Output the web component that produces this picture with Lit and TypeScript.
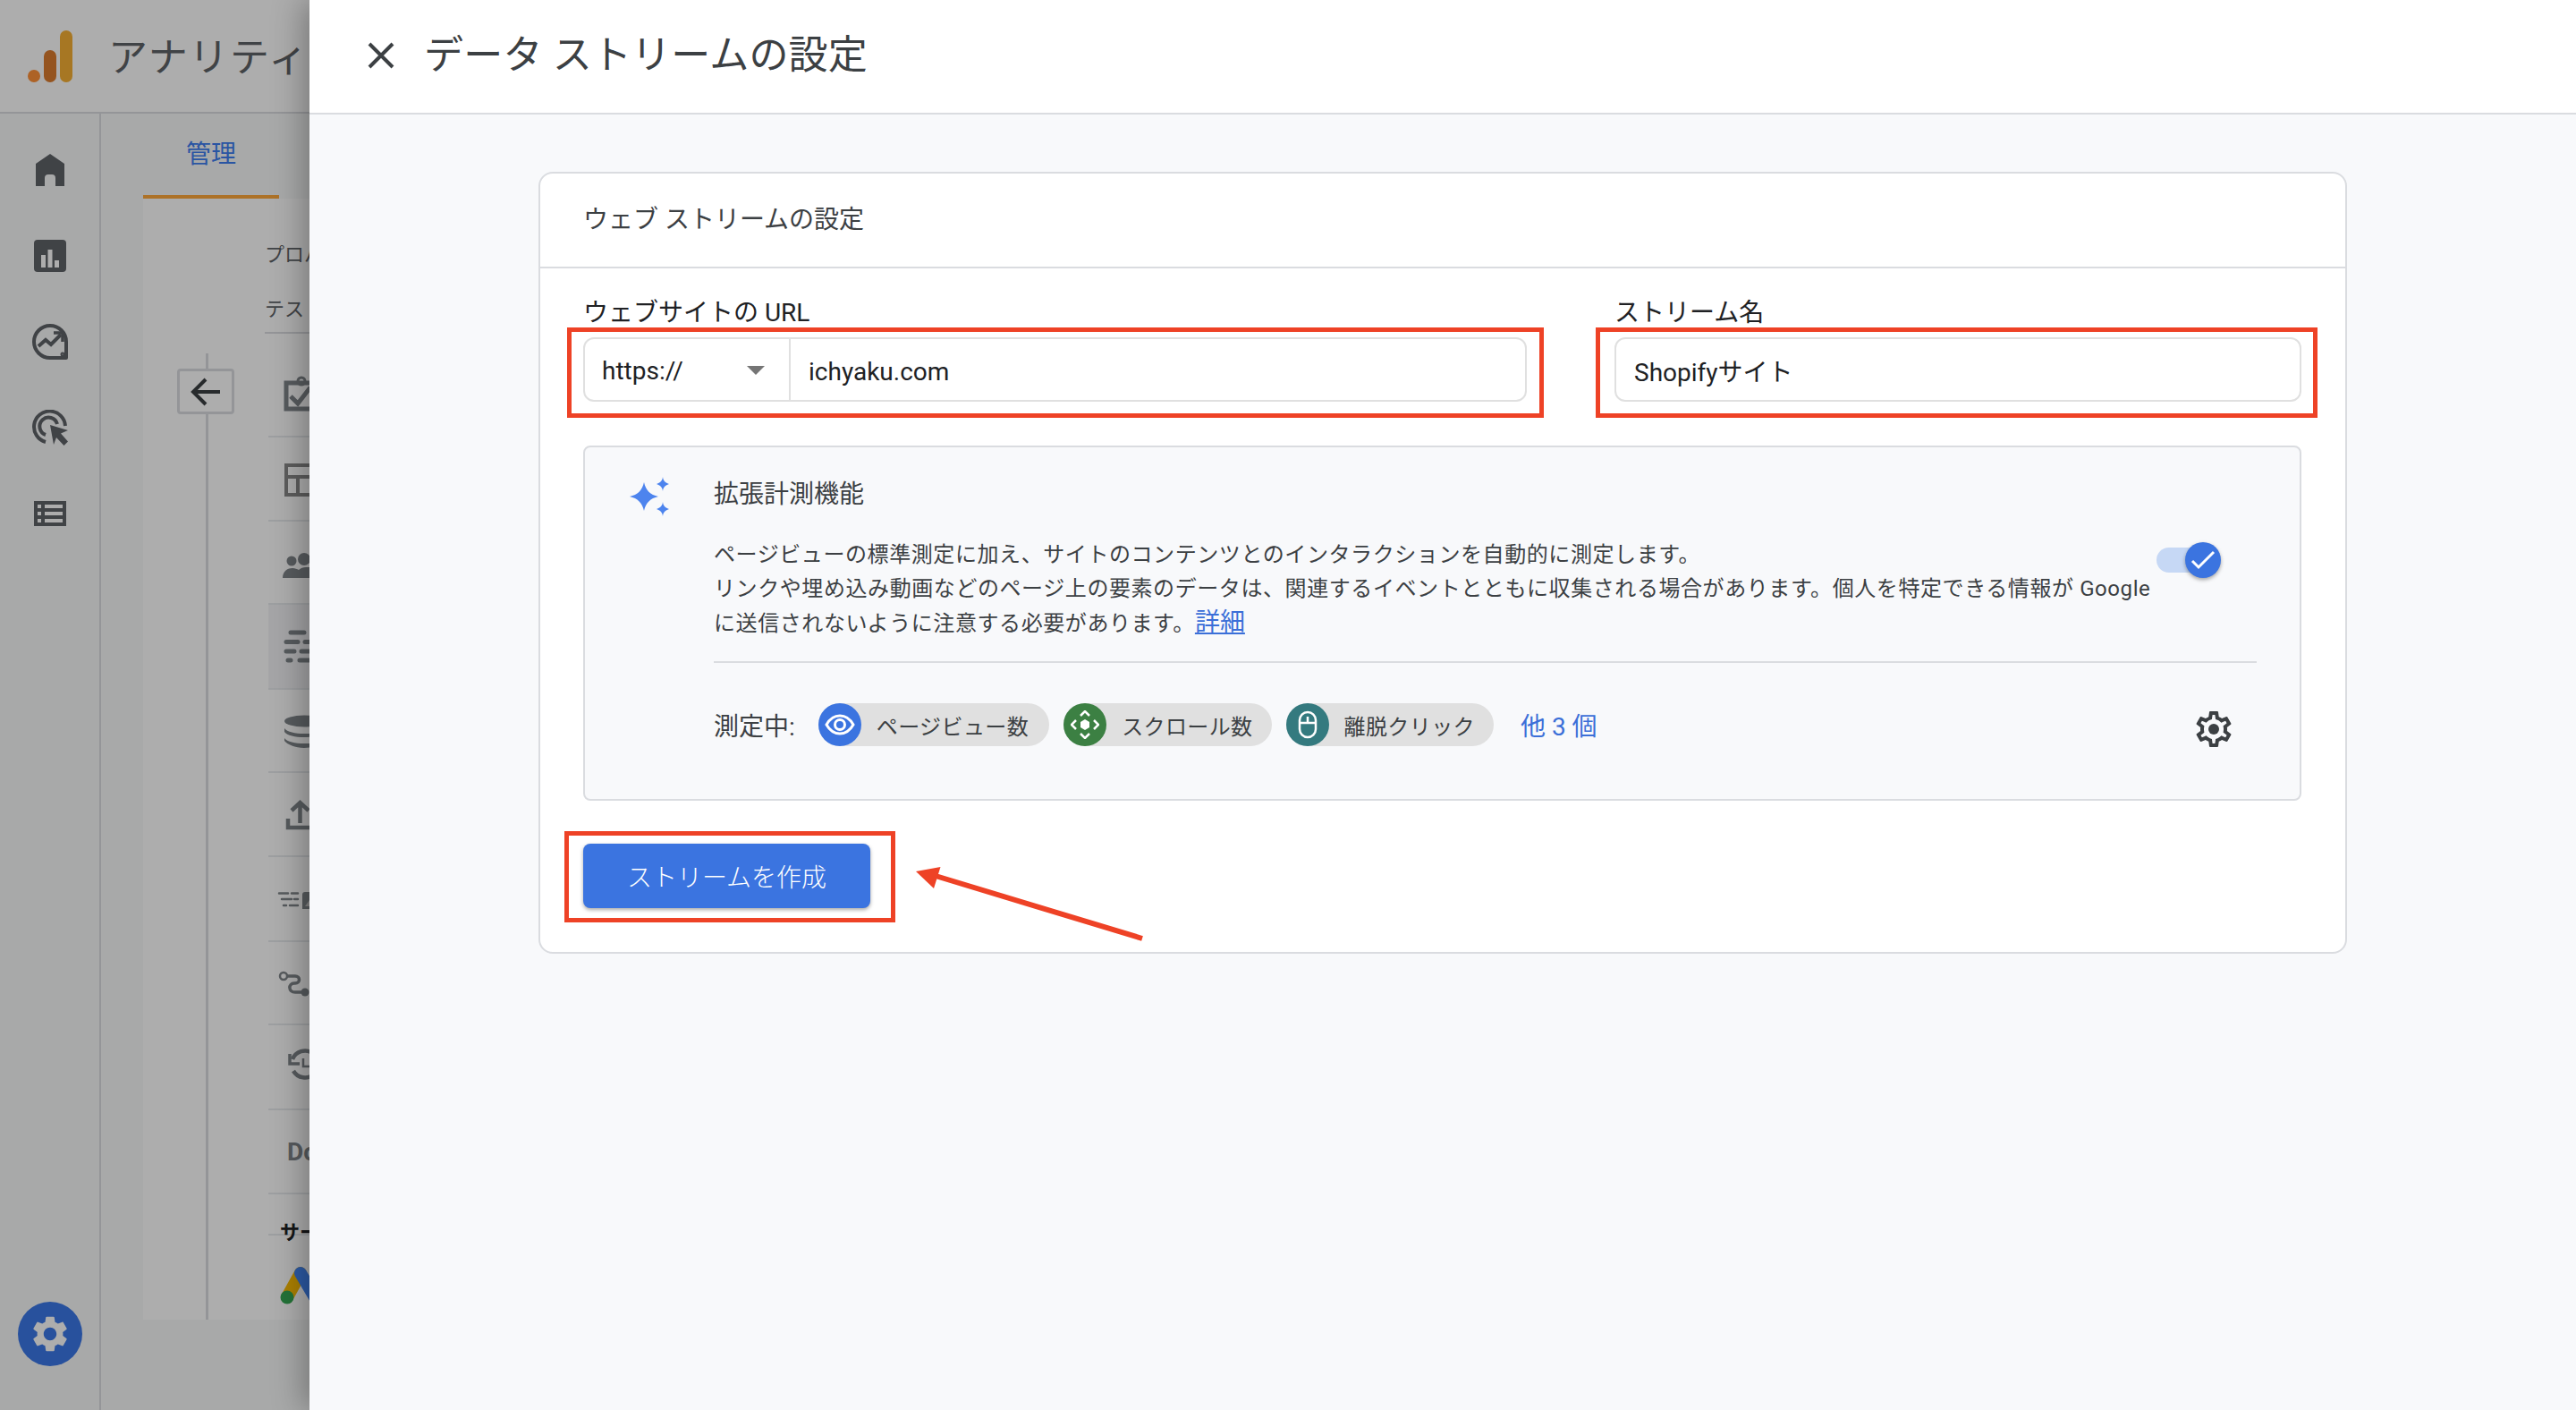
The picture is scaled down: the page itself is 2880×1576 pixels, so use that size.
import { LitElement, html, css, svg } from "lit";
import { customElement } from "lit/decorators.js";

const GEAR_FILLED =
  "M19.14 12.94c.04-.3.06-.61.06-.94 0-.32-.02-.64-.07-.94l2.03-1.58c.18-.14.23-.41.12-.61l-1.92-3.32c-.12-.22-.37-.29-.59-.22l-2.39.96c-.5-.38-1.03-.7-1.62-.94l-.36-2.54c-.04-.24-.24-.41-.48-.41h-3.84c-.24 0-.43.17-.47.41l-.36 2.54c-.59.24-1.13.57-1.62.94l-2.39-.96c-.22-.08-.47 0-.59.22L2.74 8.87c-.12.21-.08.47.12.61l2.03 1.58c-.05.3-.09.63-.09.94s.02.64.07.94l-2.03 1.58c-.18.14-.23.41-.12.61l1.92 3.32c.12.22.37.29.59.22l2.39-.96c.5.38 1.03.7 1.62.94l.36 2.54c.05.24.24.41.48.41h3.84c.24 0 .44-.17.47-.41l.36-2.54c.59-.24 1.13-.56 1.62-.94l2.39.96c.22.08.47 0 .59-.22l1.92-3.32c.12-.22.07-.47-.12-.61l-2.01-1.58zM12 15.6c-1.98 0-3.6-1.62-3.6-3.6s1.62-3.6 3.6-3.6 3.6 1.62 3.6 3.6-1.62 3.6-3.6 3.6z";

const GEAR_OUTLINE =
  "M19.43 12.98c.04-.32.07-.64.07-.98 0-.34-.03-.66-.07-.98l2.11-1.65c.19-.15.24-.42.12-.64l-2-3.46c-.09-.16-.26-.25-.44-.25-.06 0-.12.01-.17.03l-2.49 1c-.52-.4-1.08-.73-1.69-.98l-.38-2.65C14.46 2.18 14.25 2 14 2h-4c-.25 0-.46.18-.49.42l-.38 2.65c-.61.25-1.17.59-1.69.98l-2.49-1c-.06-.02-.12-.03-.18-.03-.17 0-.34.09-.43.25l-2 3.46c-.13.22-.07.49.12.64l2.11 1.65c-.04.32-.07.65-.07.98 0 .33.03.66.07.98l-2.11 1.65c-.19.15-.24.42-.12.64l2 3.46c.09.16.26.25.44.25.06 0 .12-.01.17-.03l2.49-1c.52.4 1.08.73 1.69.98l.38 2.65c.03.24.24.42.49.42h4c.25 0 .46-.18.49-.42l.38-2.65c.61-.25 1.17-.59 1.69-.98l2.49 1c.06.02.12.03.18.03.17 0 .34-.09.43-.25l2-3.46c.12-.22.07-.49-.12-.64l-2.11-1.65zm-1.98-1.71c.04.31.05.52.05.73 0 .21-.02.43-.05.73l-.14 1.13.89.7 1.08.84-.7 1.21-1.27-.51-1.04-.42-.9.68c-.43.32-.84.56-1.25.73l-1.06.43-.16 1.13-.2 1.35h-1.4l-.19-1.35-.16-1.13-1.06-.43c-.43-.18-.83-.41-1.23-.71l-.91-.7-1.06.43-1.27.51-.7-1.21 1.08-.84.89-.7-.14-1.13c-.03-.31-.05-.54-.05-.74s.02-.43.05-.73l.14-1.13-.89-.7-1.08-.84.7-1.21 1.27.51 1.04.42.9-.68c.43-.32.84-.56 1.25-.73l1.06-.43.16-1.13.2-1.35h1.39l.19 1.35.16 1.13 1.06.43c.43.18.83.41 1.23.71l.91.7 1.06-.43 1.27-.51.7 1.21-1.07.85-.89.7.14 1.13z";

// icons of the admin list, in page coordinates (the panel covers them from x=346)
const ROWS = [
  {
    top: 373,
    bottom: 489,
    icon: svg`<path d="M320 428h40v29h-40z" fill="none" stroke="#80868b" stroke-width="5"/><circle cx="337" cy="426" r="4" fill="none" stroke="#80868b" stroke-width="3"/><path d="M325 443l8 8 14-18" fill="none" stroke="#80868b" stroke-width="5"/>`,
  },
  {
    top: 489,
    bottom: 583,
    icon: svg`<path d="M320 520h40v33h-40zM320 533h40M333 533v20" fill="none" stroke="#8a8a8a" stroke-width="4"/>`,
  },
  {
    top: 583,
    bottom: 676,
    icon: svg`<circle cx="326" cy="627" r="5.5" fill="#80868b"/><circle cx="340" cy="625" r="7" fill="#80868b"/><path d="M316 646c0-8 6-11 11-11 3 0 5 1 7 2 2-2 5-3 8-3h6v12z" fill="#80868b"/>`,
  },
  {
    top: 676,
    bottom: 771,
    active: true,
    icon: svg`<path d="M325 707h15M320 717.500h13M341 717.500h8M320 728h9M337 728h12M322 738h3M335 738h14" fill="none" stroke="#80868b" stroke-width="5" stroke-linecap="round"/>`,
  },
  {
    top: 771,
    bottom: 864,
    icon: svg`<ellipse cx="340" cy="806" rx="22" ry="6.500" fill="#80868b"/><path d="M318 814c3 4 12 6 22 6s19-2 22-6v4c-3 4-12 6-22 6s-19-2-22-6zM318 825c3 4 12 6 22 6s19-2 22-6v3c-3 4-12 8-22 8s-19-4-22-8z" fill="#80868b"/>`,
  },
  {
    top: 864,
    bottom: 958,
    icon: svg`<path d="M322 915v10h30M335.500 920v-22M326 906l9.500-9 9.500 9" fill="none" stroke="#80868b" stroke-width="4.500"/>`,
  },
  {
    top: 958,
    bottom: 1053,
    icon: svg`<path d="M312 998.500h10M326 998.500h7M315 1005h11M329 1005h4M317 1012h3M324 1012h9" fill="none" stroke="#80868b" stroke-width="2.500" stroke-linecap="round"/><path d="M338 1000a3 3 0 0 1 3-3h9v19h-12z" fill="#80868b"/><path d="M341 1013l5-7 4 4v3z" fill="#c4c4c4"/>`,
  },
  {
    top: 1053,
    bottom: 1146,
    icon: svg`<circle cx="317" cy="1091" r="4" fill="none" stroke="#80868b" stroke-width="2.500"/><path d="M321 1091h9c6 0 6 8 0 8h-1c-7 0-7 10 1 10h11" fill="none" stroke="#80868b" stroke-width="3.500"/><circle cx="341" cy="1109" r="4.500" fill="#80868b"/>`,
  },
  {
    top: 1146,
    bottom: 1241,
    icon: svg`<path d="M328 1197a15 15 0 1 0-1-13" fill="none" stroke="#80868b" stroke-width="4.500"/><path d="M324 1178v11h11" fill="none" stroke="#80868b" stroke-width="3.500"/><path d="M339 1183v9h7" fill="none" stroke="#80868b" stroke-width="2.500"/>`,
  },
];

@customElement("app-root")
export class AppRoot extends LitElement {
  static styles = css`
    :host {
      display: block;
      position: relative;
      height: 1576px;
      overflow: hidden;
      font-family: Roboto, "Noto Sans CJK JP", sans-serif;
      color: #3c4043;
      background: #f8f9fa;
    }
    svg {
      display: block;
      flex: none;
    }

    /* page behind the drawer */
    .page {
      display: flex;
      flex-direction: column;
      height: 100%;
    }
    .topbar {
      display: flex;
      align-items: center;
      flex: none;
      box-sizing: border-box;
      height: 127px;
      padding-left: 31px;
      gap: 40px;
      border-bottom: 2px solid #dadce0;
      background: #fff;
    }
    .product {
      margin-top: 4px;
      font-size: 44px;
      line-height: 60px;
      letter-spacing: 1.6px;
      color: #5f6368;
      white-space: nowrap;
    }
    .page-body {
      display: flex;
      flex: 1;
      min-height: 0;
    }
    .rail {
      display: flex;
      flex-direction: column;
      align-items: center;
      flex: none;
      box-sizing: content-box;
      width: 111px;
      border-right: 2px solid #dadce0;
    }
    .rail-item {
      display: flex;
      align-items: center;
      justify-content: center;
      flex: none;
      width: 100%;
      height: 96px;
    }
    .rail-first {
      margin-top: 15px;
    }
    .admin-gear {
      display: flex;
      align-items: center;
      justify-content: center;
      width: 72px;
      height: 72px;
      margin-top: auto;
      margin-bottom: 49px;
      border-radius: 50%;
      background: #3b78e7;
    }
    .admin {
      flex: 1;
      padding-left: 47px;
      background: #f8f9fa;
      min-width: 0;
    }
    .tab {
      display: flex;
      align-items: center;
      justify-content: center;
      box-sizing: border-box;
      width: 152px;
      height: 95px;
      padding-bottom: 5px;
      border-bottom: 4px solid #ffa83c;
      font-size: 28px;
      color: #3f7ef0;
    }
    .admin-sheet {
      display: flex;
      height: 1253px;
      background: #fff;
      overflow: hidden;
    }
    .steps {
      display: flex;
      flex-direction: column;
      flex: none;
      width: 136px;
      padding-top: 173px;
      box-sizing: border-box;
    }
    .step-line {
      width: 3px;
      margin-left: 70px;
      background: #dadce0;
    }
    .step-line.short {
      height: 17px;
    }
    .step-line.long {
      flex: 1;
    }
    .back {
      display: flex;
      align-items: center;
      justify-content: center;
      box-sizing: border-box;
      width: 64px;
      height: 51px;
      margin-left: 38px;
      border: 3px solid #dadce0;
      border-radius: 4px;
    }
    .column {
      flex: 1;
      min-width: 0;
      white-space: nowrap;
      overflow: hidden;
    }
    .crumb {
      font-size: 22px;
      line-height: 30px;
      color: #5f6368;
    }
    .crumb.first {
      margin-top: 48px;
    }
    .crumb.second {
      margin-top: 31px;
      padding-bottom: 10px;
      border-bottom: 2px solid #dadce0;
    }
    .rows {
      margin-left: 4px;
    }
    .row {
      box-sizing: border-box;
      border-bottom: 2px solid #e8eaed;
    }
    .row.active {
      background: #f3f4f6;
    }
    .row.doc {
      display: flex;
      align-items: center;
      box-sizing: border-box;
      height: 94px;
      padding-left: 21px;
      font-size: 28px;
      font-weight: 700;
      color: #80868b;
    }
    .service {
      margin-top: 28px;
      padding-left: 13px;
      font-size: 22px;
      line-height: 30px;
      font-weight: 700;
      color: #202124;
      background: linear-gradient(#e8eaed, #e8eaed) no-repeat 0 16px / 100% 2px;
    }
    .ads {
      margin-top: 5px;
    }

    /* dim layer and drawer */
    .scrim {
      position: absolute;
      inset: 0;
      background: rgba(0, 0, 0, 0.32);
    }
    .drawer {
      position: absolute;
      top: 0;
      right: 0;
      bottom: 0;
      left: 346px;
      display: flex;
      flex-direction: column;
      background: #f8f9fb;
      box-shadow: -6px 0 34px rgba(0, 0, 0, 0.32);
    }
    .drawer-head {
      display: flex;
      align-items: center;
      flex: none;
      box-sizing: border-box;
      height: 128px;
      padding: 0 0 2px 56px;
      gap: 24px;
      background: #fff;
      border-bottom: 2px solid #dadce0;
    }
    .drawer-title {
      font-size: 44px;
      line-height: 60px;
      letter-spacing: 0.2px;
      color: #3c4043;
    }
    .drawer-main {
      padding: 64px 256px 0;
    }
    .card {
      border: 2px solid #dadce0;
      border-radius: 16px;
      background: #fff;
    }
    .card-head {
      box-sizing: border-box;
      height: 106px;
      padding: 34px 48px 0;
      font-size: 28px;
      line-height: 36px;
      color: #3c4043;
      border-bottom: 2px solid #dadce0;
    }
    .card-body {
      padding: 32px 49px 49px 48px;
    }
    .fields {
      display: grid;
      grid-template-columns: 1055px 1fr;
      column-gap: 98px;
    }
    .label {
      margin-bottom: 9px;
      font-size: 28px;
      line-height: 36px;
      color: #202124;
    }
    .mark-wrap {
      position: relative;
    }
    .mark {
      position: absolute;
      border: 5px solid #ee4226;
      pointer-events: none;
    }
    .mark.url {
      inset: -11px -19px -18px -18px;
    }
    .mark.name {
      inset: -11px -18px -18px -21px;
    }
    .mark.submit {
      inset: -14px -28px -16px -21px;
    }
    .input {
      display: flex;
      align-items: center;
      box-sizing: border-box;
      height: 72px;
      border: 2px solid #e0e0e0;
      border-radius: 12px;
      background: #fff;
      font-size: 28px;
      color: #202124;
    }
    .proto {
      display: flex;
      align-items: center;
      justify-content: space-between;
      flex: none;
      box-sizing: border-box;
      width: 230px;
      height: 100%;
      padding: 2px 27px 0 19px;
      border-right: 2px solid #e0e0e0;
    }
    .caret {
      width: 0;
      height: 0;
      border-left: 10px solid transparent;
      border-right: 10px solid transparent;
      border-top: 10px solid #757575;
    }
    .value {
      padding: 4px 0 0 20px;
    }
    .value.name {
      padding-top: 2px;
    }
    .enhanced {
      display: grid;
      grid-template-columns: 144px 1fr;
      margin-top: 49px;
      padding: 35px 48px 59px 0;
      border: 2px solid #dadce0;
      border-radius: 8px;
      background: #f8f9fb;
    }
    .spark {
      margin: -2px 0 0 50px;
    }
    .enhanced-title {
      font-size: 28px;
      line-height: 36px;
      color: #3c4043;
    }
    .desc-row {
      display: flex;
      margin-top: 30px;
    }
    .desc {
      flex: 1;
      font-size: 24px;
      line-height: 38px;
      letter-spacing: 0.58px;
      white-space: nowrap;
      color: #3c4043;
    }
    .desc a {
      font-size: 28px;
      letter-spacing: 0;
      color: #3b6fd8;
      text-decoration: underline;
    }
    .toggle {
      position: relative;
      flex: none;
      width: 72px;
      height: 40px;
      margin: 5px 40px 0 0;
    }
    .toggle-track {
      position: absolute;
      top: 6px;
      left: 0;
      width: 60px;
      height: 28px;
      border-radius: 14px;
      background: #c6d8f5;
    }
    .toggle-thumb {
      position: absolute;
      top: 0;
      right: 0;
      display: flex;
      align-items: center;
      justify-content: center;
      width: 40px;
      height: 40px;
      border-radius: 50%;
      background: #3b74e0;
      box-shadow: 0 2px 4px rgba(0, 0, 0, 0.35);
    }
    .rule {
      height: 2px;
      margin-top: 23px;
      background: #dadce0;
    }
    .measuring {
      display: flex;
      align-items: center;
      margin-top: 45px;
      height: 48px;
    }
    .measuring-label {
      margin-right: 26px;
      font-size: 28px;
      color: #3c4043;
    }
    .chips {
      display: flex;
      gap: 16px;
    }
    .chip {
      display: flex;
      align-items: center;
      height: 48px;
      padding-right: 21px;
      gap: 17px;
      border-radius: 24px;
      background: #e0e0e0;
      font-size: 24px;
      letter-spacing: 0.4px;
      color: #3c4043;
      white-space: nowrap;
    }
    .chip:first-child {
      padding-right: 23px;
    }
    .chip-icon {
      display: flex;
      align-items: center;
      justify-content: center;
      width: 48px;
      height: 48px;
      border-radius: 50%;
    }
    .chip-icon.blue {
      background: #3b74e0;
    }
    .chip-icon.green {
      background: #3c8043;
    }
    .chip-icon.teal {
      background: #347a7f;
    }
    .more {
      margin-left: 30px;
      font-size: 28px;
      color: #3b6fd8;
    }
    .gear {
      margin: 10px 24px 0 auto;
    }
    .actions {
      margin-top: 48px;
    }
    .button-wrap {
      position: relative;
      width: 321px;
      height: 72px;
    }
    .primary {
      display: flex;
      align-items: center;
      justify-content: center;
      height: 100%;
      border-radius: 8px;
      background: #3b74e0;
      color: #fff;
      font-size: 28px;
      font-weight: 300;
      box-shadow: 0 2px 4px rgba(0, 0, 0, 0.35);
    }
    .arrow {
      position: absolute;
      left: 368px;
      top: 18px;
    }
  `;

  private renderRail() {
    return html`
      <div class="rail">
        <div class="rail-item rail-first">
          <svg width="32" height="36" viewBox="0 0 32 36">
            <path d="M16 0l16 11v25H22V27a4 4 0 0 0-4-4h-4a4 4 0 0 0-4 4v9H0V11z" fill="#5f6368" />
          </svg>
        </div>
        <div class="rail-item">
          <svg width="36" height="36" viewBox="0 0 36 36">
            <rect width="36" height="36" rx="4" fill="#5f6368" />
            <path d="M8 17h5v14H8zM15.500 11h5v20h-5zM23 23h5v8h-5z" fill="#fff" />
          </svg>
        </div>
        <div class="rail-item">
          <svg width="40" height="40" viewBox="0 0 40 40" fill="none" stroke="#5f6368">
            <path d="M38 38H20A18 18 0 1 1 38 20z" stroke-width="4" stroke-linejoin="round" />
            <path d="M7 25l8-7 6 5 11-11" stroke-width="4" />
            <path d="M24 10h10v10" stroke-width="3.500" />
            <circle cx="34" cy="34" r="1.500" stroke-width="2" />
          </svg>
        </div>
        <div class="rail-item">
          <svg width="40" height="40" viewBox="0 0 40 40" fill="none" stroke="#5f6368">
            <path d="M15 36A17.500 17.500 0 1 1 37 18" stroke-width="4" />
            <path d="M15 28A10 10 0 1 1 28 16" stroke-width="4" />
            <path d="M20 17l20 6-8 3.500 8 9-4.500 4.500-8.500-9-3 8z" fill="#5f6368" stroke="none" />
          </svg>
        </div>
        <div class="rail-item">
          <svg width="36" height="28" viewBox="0 0 36 28">
            <rect width="36" height="28" fill="#5f6368" />
            <path d="M4 4h4v4H4zM12 4h20v4H12zM4 12h4v4H4zM12 12h20v4H12zM4 20h4v4H4zM12 20h20v4H12z" fill="#fff" />
          </svg>
        </div>
        <div class="admin-gear">
          <svg width="48" height="48" viewBox="0 0 24 24"><path d=${GEAR_FILLED} fill="#fff" /></svg>
        </div>
      </div>
    `;
  }

  private renderAdmin() {
    return html`
      <div class="admin">
        <div class="tab">管理</div>
        <div class="admin-sheet">
          <div class="steps">
            <div class="step-line short"></div>
            <div class="back">
              <svg width="34" height="32" viewBox="0 0 34 32" fill="none" stroke="#3c4043" stroke-width="4">
                <path d="M33 16H3M17 2L3 16l14 14" />
              </svg>
            </div>
            <div class="step-line long"></div>
          </div>
          <div class="column">
            <div class="crumb first">プロパティ</div>
            <div class="crumb second">テスト</div>
            <div class="rows">
              ${ROWS.map(
                (r) => html`
                  <div class="row ${r.active ? "active" : ""}">
                    <svg width="46" height=${r.bottom - r.top - 2} viewBox="300 ${r.top} 46 ${r.bottom - r.top - 2}">
                      ${r.icon}
                    </svg>
                  </div>
                `
              )}
              <div class="row doc">Do</div>
              <div class="service">サービス間のリンク設定</div>
              <svg class="ads" width="46" height="70" viewBox="300 1400 46 70">
                <path d="M321 1452l15-27" stroke="#fbbc04" stroke-width="14" stroke-linecap="round" />
                <path d="M336 1425l20 34" stroke="#4285f4" stroke-width="14" stroke-linecap="round" />
                <ellipse cx="321" cy="1452" rx="7.500" ry="7.500" fill="#34a853" />
              </svg>
            </div>
          </div>
        </div>
      </div>
    `;
  }

  private renderEnhanced() {
    return html`
      <div class="enhanced">
        <svg class="spark" width="46" height="46" viewBox="0 0 46 46" fill="#4d84ee">
          <path d="M16 6C18 15 23 20 32 22 23 24 18 29 16 38 14 29 9 24 0 22 9 20 14 15 16 6z" />
          <path d="M37 0C37.500 4 39 6 44 8 39 10 37.500 12 37 16 36.500 12 35 10 30 8 35 6 36.500 4 37 0z" />
          <path d="M37 28C37.500 32 39 34 44 36 39 38 37.500 40 37 44 36.500 40 35 38 30 36 35 34 36.500 32 37 28z" />
        </svg>
        <div>
          <div class="enhanced-title">拡張計測機能</div>
          <div class="desc-row">
            <div class="desc">
              ページビューの標準測定に加え、サイトのコンテンツとのインタラクションを自動的に測定します。<br />
              リンクや埋め込み動画などのページ上の要素のデータは、関連するイベントとともに収集される場合があります。個人を特定できる情報が Google<br />
              に送信されないように注意する必要があります。<a>詳細</a>
            </div>
            <div class="toggle">
              <div class="toggle-track"></div>
              <div class="toggle-thumb">
                <svg width="28" height="22" viewBox="0 0 28 22" fill="none" stroke="#fff" stroke-width="3">
                  <path d="M2 12l7 7L26 2" />
                </svg>
              </div>
            </div>
          </div>
          <div class="rule"></div>
          <div class="measuring">
            <span class="measuring-label">測定中:</span>
            <div class="chips">
              <div class="chip">
                <span class="chip-icon blue">
                  <svg width="34" height="24" viewBox="0 0 34 24" fill="none" stroke="#fff" stroke-width="3">
                    <path d="M2 12C6 5 11 2 17 2s11 3 15 10c-4 7-9 10-15 10S6 19 2 12z" />
                    <circle cx="17" cy="12" r="5.500" />
                  </svg>
                </span>
                ページビュー数
              </div>
              <div class="chip">
                <span class="chip-icon green">
                  <svg width="32" height="32" viewBox="0 0 32 32" fill="none" stroke="#fff" stroke-width="2.500">
                    <path d="M11 6l5-5 5 5M11 26l5 5 5-5M6 11l-5 5 5 5M26 11l5 5-5 5" />
                    <path d="M16 10l5 3v6l-5 3-5-3v-6z" fill="#fff" stroke="none" />
                  </svg>
                </span>
                スクロール数
              </div>
              <div class="chip">
                <span class="chip-icon teal">
                  <svg width="22" height="32" viewBox="0 0 22 32" fill="none" stroke="#fff" stroke-width="2.500">
                    <rect x="2" y="2" width="18" height="28" rx="9" />
                    <path d="M2 14h18M11 7v7" />
                  </svg>
                </span>
                離脱クリック
              </div>
            </div>
            <span class="more">他 3 個</span>
            <svg class="gear" width="48" height="48" viewBox="0 0 24 24" fill="#3c4043">
              <path d=${GEAR_OUTLINE} />
              <circle cx="12" cy="12" r="3" />
            </svg>
          </div>
        </div>
      </div>
    `;
  }

  render() {
    return html`
      <div class="page">
        <div class="topbar">
          <svg width="50" height="58" viewBox="0 0 50 58">
            <circle cx="7" cy="51" r="7" fill="#ff9139" />
            <rect x="18" y="22" width="14" height="36" rx="7" fill="#dc7c2e" />
            <rect x="36" y="0" width="14" height="58" rx="7" fill="#f7b034" />
          </svg>
          <span class="product">アナリティクス</span>
        </div>
        <div class="page-body">${this.renderRail()} ${this.renderAdmin()}</div>
      </div>
      <div class="scrim"></div>
      <div class="drawer">
        <div class="drawer-head">
          <svg width="48" height="48" viewBox="0 0 48 48" fill="none" stroke="#3c4043" stroke-width="4">
            <path d="M11 11l26 26M37 11L11 37" />
          </svg>
          <span class="drawer-title">データ ストリームの設定</span>
        </div>
        <div class="drawer-main">
          <div class="card">
            <div class="card-head">ウェブ ストリームの設定</div>
            <div class="card-body">
              <div class="fields">
                <div>
                  <div class="label">ウェブサイトの URL</div>
                  <div class="mark-wrap">
                    <div class="input">
                      <div class="proto"><span>https://</span><span class="caret"></span></div>
                      <span class="value">ichyaku.com</span>
                    </div>
                    <div class="mark url"></div>
                  </div>
                </div>
                <div>
                  <div class="label">ストリーム名</div>
                  <div class="mark-wrap">
                    <div class="input"><span class="value name">Shopifyサイト</span></div>
                    <div class="mark name"></div>
                  </div>
                </div>
              </div>
              ${this.renderEnhanced()}
              <div class="actions">
                <div class="button-wrap">
                  <div class="primary">ストリームを作成</div>
                  <div class="mark submit"></div>
                  <svg class="arrow" width="260" height="95" viewBox="0 0 260 95">
                    <path d="M26 18L257 88" stroke="#ee4226" stroke-width="6" />
                    <path d="M4 13l27.500-5L24 32z" fill="#ee4226" />
                  </svg>
                </div>
              </div>
            </div>
          </div>
        </div>
      </div>
    `;
  }
}
